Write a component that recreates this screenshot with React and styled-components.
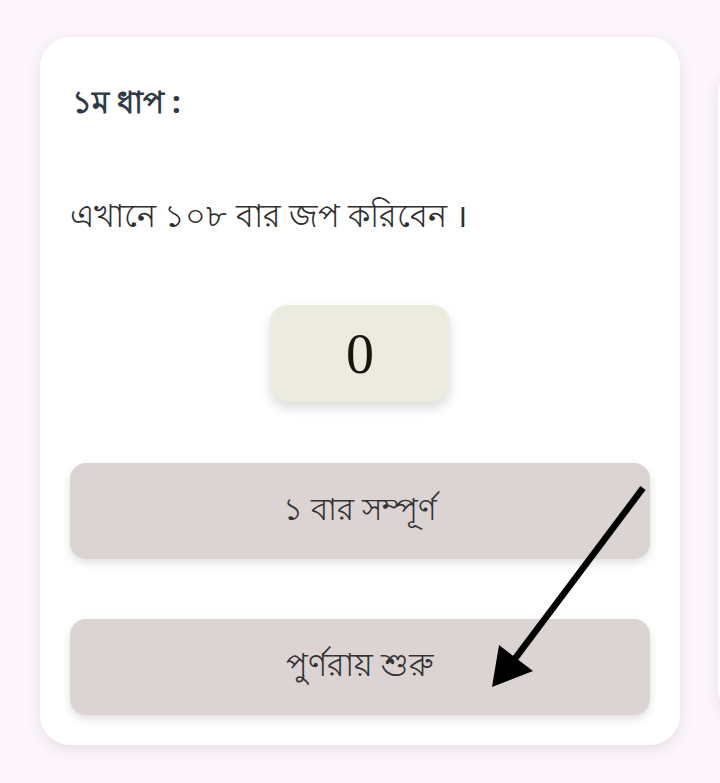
import styled, { createGlobalStyle } from "styled-components";

const GlobalStyle = createGlobalStyle`
  html, body {
    margin: 0;
    background: #fcf5fb;
  }
  body {
    font-family: "Noto Sans", "Liberation Sans", sans-serif;
  }
`;

export default function App() {
  return (
    <>
      <GlobalStyle />
      <Pager>
        <Card>
          <StepTitle>১ম ধাপ :</StepTitle>
          <Instruction>এখানে ১০৮ বার জপ করিবেন ।</Instruction>
          <Counter>0</Counter>
          <ActionButton>১ বার সম্পূর্ণ</ActionButton>
          <ActionButton $gap={60} $size={32}>পুর্ণরায় শুরু</ActionButton>
          <Arrow viewBox="0 0 640 708" aria-hidden="true">
            <line x1="603" y1="451" x2="474" y2="623" stroke="#000" strokeWidth="6.5" strokeLinecap="butt" />
            <polygon points="452,650 459,608 493,634" fill="#000" />
          </Arrow>
        </Card>
        <Card $peek />
      </Pager>
    </>
  );
}

// ----------------------- Styled Components -----------------------
const Pager = styled.div`
  display: flex;
  align-items: flex-start;
  gap: 38px;
  padding: 37px 0 0 40px;
  height: 783px;
  box-sizing: border-box;
  overflow: hidden;
`;

const Card = styled.div`
  position: relative;
  flex: 0 0 640px;
  height: ${(p) => (p.$peek ? "656px" : "708px")};
  margin-top: ${(p) => (p.$peek ? "26px" : "0")};
  box-sizing: border-box;
  padding: 0 30px;
  display: flex;
  flex-direction: column;
  background: #ffffff;
  border-radius: 30px;
  box-shadow: 0 4px 14px rgba(110, 80, 110, 0.14);
`;

const StepTitle = styled.h2`
  margin: 44px 0 0 2px;
  font-size: 31px;
  font-weight: 700;
  line-height: 40px;
  color: #2e3b46;
`;

const Instruction = styled.p`
  margin: 72px 0 0;
  font-size: 32px;
  line-height: 44px;
  color: #2f2f2f;
`;

const Counter = styled.div`
  align-self: center;
  margin-top: 68px;
  width: 180px;
  height: 97px;
  display: flex;
  align-items: center;
  justify-content: center;
  background: #ecebdf;
  border-radius: 18px;
  box-shadow: 0 6px 12px rgba(0, 0, 0, 0.14);
  font-family: "Liberation Serif", serif;
  font-size: 56px;
  color: #1a1410;
`;

const ActionButton = styled.button`
  margin-top: ${(p) => (p.$gap ?? 61)}px;
  height: 96px;
  width: 100%;
  border: none;
  border-radius: 16px;
  background: #dbd4d3;
  box-shadow: 0 4px 8px rgba(0, 0, 0, 0.12);
  font-family: "Noto Sans", "Liberation Sans", sans-serif;
  font-size: ${(p) => p.$size ?? 31}px;
  color: #333333;
  cursor: pointer;
`;

const Arrow = styled.svg`
  position: absolute;
  left: 0;
  top: 0;
  width: 640px;
  height: 708px;
  pointer-events: none;
`;
